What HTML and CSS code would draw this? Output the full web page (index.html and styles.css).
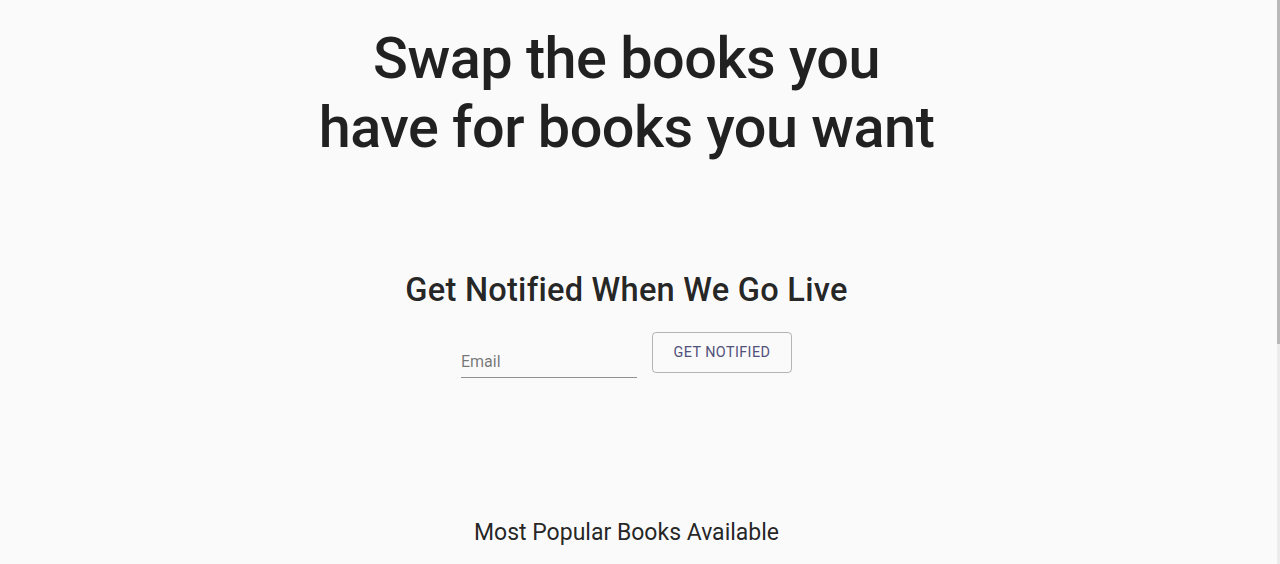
FILE: index.html
```html
<!DOCTYPE html>
<html>
<head>
<meta charset="utf-8">
<link rel="stylesheet" href="styles.css">
</head>
<body>
<main class="page">
  <h1 class="hero">Swap the books you<br>have for books you want</h1>
  <section class="notify">
    <h2 class="notify-title">Get Notified When We Go Live</h2>
    <form class="notify-form">
      <label class="field">
        <input class="field-input" type="text" placeholder="Email">
      </label>
      <button class="btn-outline" type="button">Get Notified</button>
    </form>
  </section>
  <h3 class="popular">Most Popular Books Available</h3>
</main>
<div class="scrollbar"><div class="scrollbar-thumb"></div></div>
</body>
</html>
```

FILE: styles.css
```css
html, body {
  margin: 0;
  padding: 0;
  background: #fafafa;
  height: 100%;
  overflow: hidden;
}
body {
  font-family: Roboto, "Liberation Sans", sans-serif;
  color: rgba(0,0,0,0.87);
}
.page {
  display: flex;
  flex-direction: column;
  align-items: center;
  padding: 24px 27px 0 0;
}
.hero {
  margin: 0;
  font-size: 57.6px;
  line-height: 69.1px;
  font-weight: 500;
  text-align: center;
  letter-spacing: -0.5px;
}
.notify {
  display: flex;
  flex-direction: column;
  align-items: center;
  margin-top: 109px;
}
.notify-title {
  margin: 0;
  font-size: 32.6px;
  line-height: 38px;
  font-weight: 500;
  letter-spacing: 0.25px;
}
.notify-form {
  display: flex;
  align-items: flex-start;
  gap: 15px;
  margin-top: 23px;
}
.field {
  display: block;
  width: 176px;
  border-bottom: 1px solid rgba(0,0,0,0.42);
}
.field-input {
  display: block;
  width: 100%;
  box-sizing: border-box;
  border: 0;
  background: transparent;
  font-family: inherit;
  font-size: 16px;
  line-height: 18px;
  height: 45px;
  padding: 20px 0 7px;
  outline: none;
  color: rgba(0,0,0,0.87);
}
.field-input::placeholder {
  color: rgba(0,0,0,0.54);
}
.btn-outline {
  width: 140px;
  height: 41px;
  box-sizing: border-box;
  border: 1px solid rgba(0,0,0,0.28);
  border-radius: 4px;
  background: transparent;
  color: #51517a;
  font-family: inherit;
  font-size: 14.4px;
  font-weight: 400;
  text-transform: uppercase;
  letter-spacing: 0.4px;
}
.popular {
  margin: 140px 0 0;
  font-size: 23px;
  line-height: 30px;
  font-weight: 400;
}
.scrollbar {
  position: fixed;
  top: 0;
  right: 0;
  width: 3px;
  height: 100%;
  background: #ececec;
}
.scrollbar-thumb {
  height: 344px;
  background: #b8b8b8;
}
```
